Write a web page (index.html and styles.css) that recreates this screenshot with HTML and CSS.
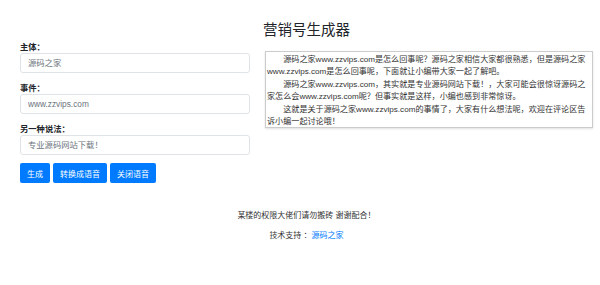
FILE: index.html
```html
<!DOCTYPE html>
<html lang="zh-CN">
<head>
    <meta charset="UTF-8">
    <meta name="viewport" content="width=device-width, initial-scale=1.0">
    <title>营销号生成器</title>
    <link rel="stylesheet" href="styles.css">
</head>
<body>
    <div class="container">
        <h1 class="title">营销号生成器</h1>
        <div class="row">
            <div class="form-col">
                <div class="form-group">
                    <label for="subject">主体：</label>
                    <input id="subject" class="form-control" type="text" placeholder="源码之家">
                </div>
                <div class="form-group">
                    <label for="event">事件：</label>
                    <input id="event" class="form-control" type="text" placeholder="www.zzvips.com">
                </div>
                <div class="form-group">
                    <label for="other">另一种说法：</label>
                    <input id="other" class="form-control" type="text" placeholder="专业源码网站下载！">
                </div>
                <div class="btn-row">
                    <button class="btn">生成</button>
                    <button class="btn">转换成语音</button>
                    <button class="btn">关闭语音</button>
                </div>
            </div>
            <div class="result-col">
                <textarea class="result" readonly>　　源码之家www.zzvips.com是怎么回事呢？源码之家相信大家都很熟悉，但是源码之家
www.zzvips.com是怎么回事呢，下面就让小编带大家一起了解吧。
　　源码之家www.zzvips.com，其实就是专业源码网站下载！，大家可能会很惊讶源码之
家怎么会www.zzvips.com呢？但事实就是这样，小编也感到非常惊讶。
　　这就是关于源码之家www.zzvips.com的事情了，大家有什么想法呢，欢迎在评论区告
诉小编一起讨论哦！</textarea>
            </div>
        </div>
        <div class="footer">
            <p>某楼的权限大佬们请勿搬砖 谢谢配合！</p>
            <p>技术支持 ：<a href="#">源码之家</a></p>
        </div>
    </div>
</body>
</html>
```

FILE: styles.css
```css
body {
    font-family: "Liberation Sans", "Noto Sans CJK SC", sans-serif;
    margin: 0;
    padding: 0;
    background-color: #fff;
    color: #212529;
    font-size: 8px;
    text-spacing-trim: space-all;
}
.container {
    padding: 0 7px 0 20px;
}
.title {
    font-size: 14.5px;
    font-weight: normal;
    text-align: center;
    line-height: 18px;
    margin: 0;
    padding-top: 21px;
    height: 21px;
}
.row {
    display: flex;
    gap: 15px;
}
.form-col {
    width: 230px;
}
.form-group {
    margin-bottom: 10px;
}
.form-group label {
    display: block;
    font-weight: bold;
    font-size: 8.3px;
    line-height: 10px;
    margin-bottom: 1px;
}
.form-control {
    display: block;
    box-sizing: border-box;
    width: 100%;
    height: 20px;
    padding: 0 7px;
    font-family: inherit;
    font-size: 8.3px;
    color: #495057;
    border: 1px solid #dfe3e8;
    border-radius: 3px;
    outline: none;
}
.form-control::placeholder {
    color: #6c757d;
}
.btn-row {
    display: flex;
    gap: 3px;
    margin-top: -2px;
}
.btn {
    height: 20px;
    padding: 0 7px;
    font-family: inherit;
    font-size: 8px;
    color: #fff;
    background-color: #007bff;
    border: none;
    border-radius: 2px;
}
.result-col {
    flex: 1;
    padding-top: 9px;
}
.result {
    display: block;
    box-sizing: border-box;
    width: 100%;
    height: 77px;
    padding: 2px 1px;
    font-family: inherit;
    font-size: 8.1px;
    line-height: 12.4px;
    color: #333;
    border: 1px solid #ccc;
    box-shadow: 0 1px 2px rgba(0, 0, 0, 0.12);
    resize: none;
    overflow: hidden;
    white-space: pre;
}
.footer {
    text-align: center;
    color: #333;
    margin-top: 23px;
}
.footer p {
    margin: 0;
    line-height: 20px;
}
.footer a {
    color: #007bff;
    text-decoration: none;
}
```
